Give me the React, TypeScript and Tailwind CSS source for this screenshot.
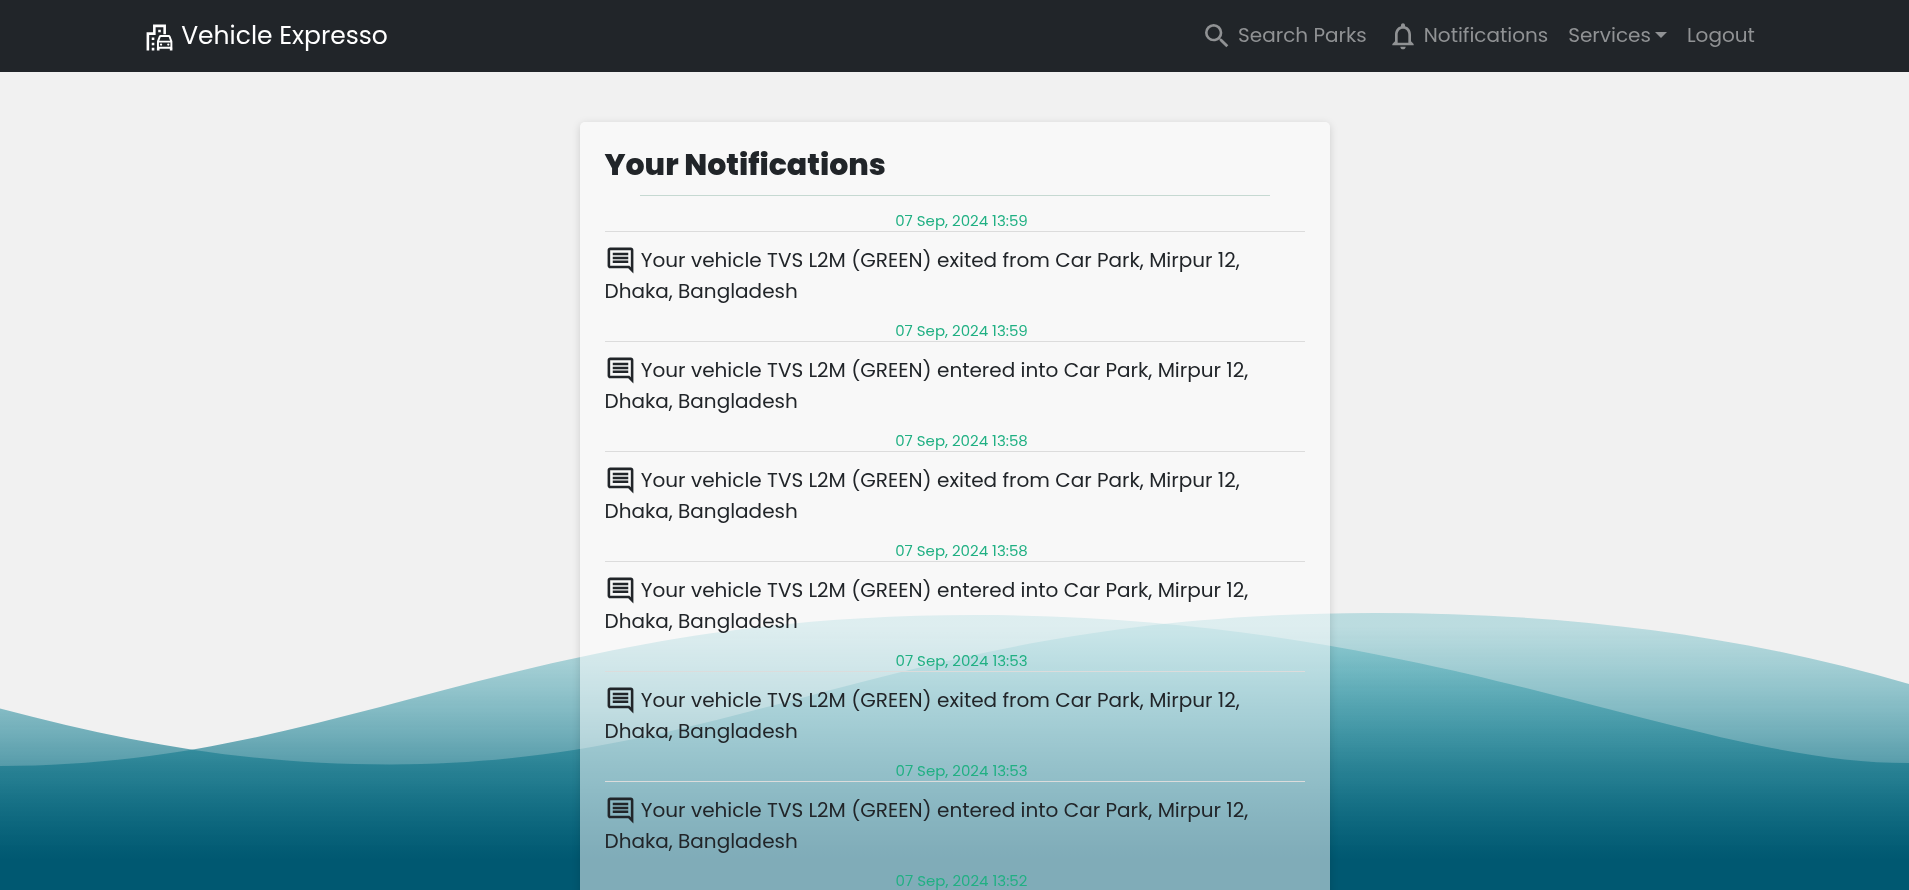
import { MdNotificationsNone, MdOutlineComment, MdSearch } from "react-icons/md";

const place = "Car Park, Mirpur 12, Dhaka, Bangladesh";

const notifications = [
  { id: 1, time: "07 Sep, 2024 13:59", action: "exited from" },
  { id: 2, time: "07 Sep, 2024 13:59", action: "entered into" },
  { id: 3, time: "07 Sep, 2024 13:58", action: "exited from" },
  { id: 4, time: "07 Sep, 2024 13:58", action: "entered into" },
  { id: 5, time: "07 Sep, 2024 13:53", action: "exited from" },
  { id: 6, time: "07 Sep, 2024 13:53", action: "entered into" },
  { id: 7, time: "07 Sep, 2024 13:52", action: "exited from" },
];

function ParkLogo({ className }: { className?: string }) {
  return (
    <svg aria-hidden="true" viewBox="0 0 24 24" fill="none" stroke="currentColor" className={className}>
      <path strokeWidth="2" d="M3 22V9H8V3H16V9.5" />
      <path fill="currentColor" stroke="none" d="M11 6h2v2h-2zM6 12h2v2H6zM6 16h2v2H6zM6 20h2v2H6z" />
      <path
        strokeWidth="1.5"
        strokeLinejoin="round"
        d="M10.8 15L12.2 11.3Q12.4 10.8 12.9 10.8H19.1Q19.6 10.8 19.8 11.3L21.2 15V20H10.8ZM10.8 15.2H21.2"
      />
      <path fill="currentColor" stroke="none" d="M10 20h2v2h-2zM20 20h2v2h-2z" />
      <circle cx="13.2" cy="17.5" r="0.9" fill="currentColor" stroke="none" />
      <circle cx="18.8" cy="17.5" r="0.9" fill="currentColor" stroke="none" />
    </svg>
  );
}

function Waves() {
  return (
    <svg
      aria-hidden="true"
      className="pointer-events-none fixed inset-x-0 bottom-0 h-[290px] w-full"
      viewBox="0 600 1909 290"
      preserveAspectRatio="none"
    >
      <defs>
        <linearGradient id="sea" gradientUnits="userSpaceOnUse" x1="0" y1="860" x2="0" y2="627">
          <stop offset="0" stopColor="#005871" />
          <stop offset="1" stopColor="#3eaab6" stopOpacity="0.3" />
        </linearGradient>
      </defs>
      <path
        fill="url(#sea)"
        d="M0 890V708.5C135 744 250 764.5 390 764.5C740 764.5 900 613 1375 613C1560 613 1735 633 1909 684V890Z"
      />
      <path fill="url(#sea)" d="M0 890V766C340 766 516 615 975 615C1434 615 1685 763 1909 763V890Z" />
    </svg>
  );
}

function Navbar() {
  return (
    <nav className="relative z-10 flex h-[72px] shrink-0 justify-center bg-[#212529]">
      <div className="flex w-[85%] items-center justify-between">
        <a href="#home" className="flex items-center gap-1.5 pl-px text-[25px] text-white">
          <ParkLogo className="mt-0.5 size-[31px]" />
          Vehicle Expresso
        </a>
        <ul className="flex items-center gap-5 pr-[11px] pb-0.5 text-xl text-[#909294]">
          <li>
            <a href="#search" className="flex items-center gap-[5px]">
              <MdSearch className="mt-0.5 size-8" />
              Search Parks
            </a>
          </li>
          <li>
            <a href="#notifications" className="flex items-center gap-[5px]">
              <MdNotificationsNone className="mt-0.5 size-8" />
              Notifications
            </a>
          </li>
          <li>
            <button type="button" className="flex items-center gap-1">
              Services
              <span className="size-0 border-x-6 border-t-6 border-x-transparent border-t-current" />
            </button>
          </li>
          <li>
            <a href="#logout">Logout</a>
          </li>
        </ul>
      </div>
    </nav>
  );
}

export default function App() {
  return (
    <div className="flex h-screen flex-col bg-[#f1f1f1] font-[Poppins,Inter,sans-serif] text-[#212529]">
      <Waves />
      <Navbar />
      <main className="relative flex-1 overflow-y-auto [scrollbar-width:none]">
        <section className="mx-auto mt-[50px] w-full max-w-[750px] rounded-[5px] bg-white/50 p-[25px] shadow-[0_2px_8px_rgba(0,0,0,0.15)]">
          <h1 className="text-[30px] leading-9 font-extrabold">Your Notifications</h1>
          <hr className="mx-auto mt-3 mb-3.5 w-[90%] border-[#c6d9d2]" />
          <ul>
            {notifications.map((item) => (
              <li key={item.id} className="mb-[13px]">
                <div className="border-b border-[#dcdcdc] pl-3.5 text-center text-[15px] leading-[21px] text-[#20b083]">
                  <time>{item.time}</time>
                </div>
                <p className="mt-[13px] text-xl leading-[31px]">
                  <MdOutlineComment className="-mt-1.5 -mb-1 inline-block size-[31px] align-middle" />{" "}
                  Your vehicle TVS L2M (GREEN) {item.action} {place}
                </p>
              </li>
            ))}
          </ul>
        </section>
      </main>
    </div>
  );
}
